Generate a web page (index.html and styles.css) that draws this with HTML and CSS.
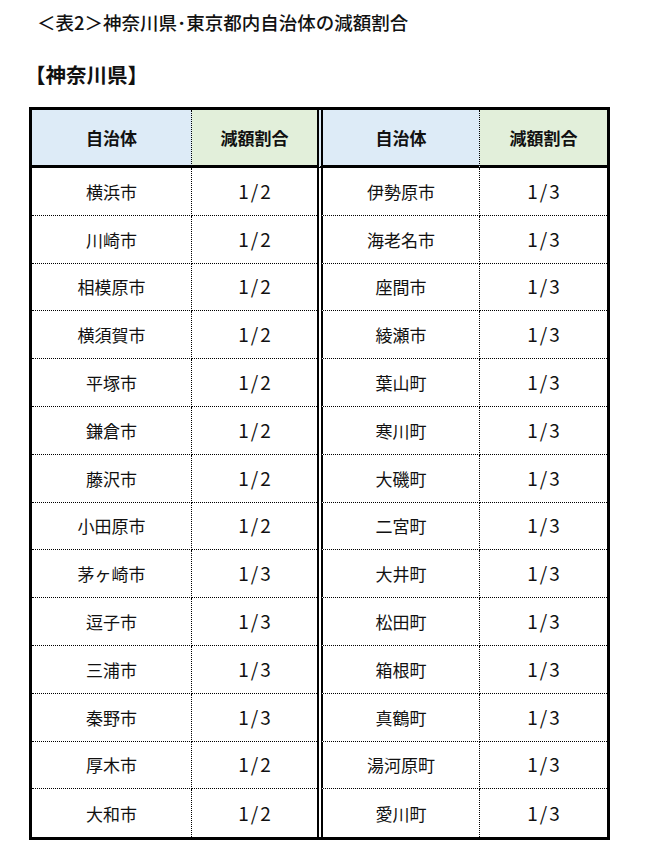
FILE: index.html
```html
<!DOCTYPE html>
<html lang="ja">
<head>
<meta charset="utf-8">
<title>表2</title>
<link rel="stylesheet" href="styles.css">
</head>
<body>
<h1 class="title">＜表2＞神奈川県･東京都内自治体の減額割合</h1>
<h2 class="subtitle">【神奈川県】</h2>
<div class="table">
  <div class="cell head name">自治体</div>
  <div class="cell head rate">減額割合</div>
  <div class="cell head name second">自治体</div>
  <div class="cell head rate">減額割合</div>

  <div class="cell">横浜市</div><div class="cell num">1/2</div><div class="cell second">伊勢原市</div><div class="cell num">1/3</div>
  <div class="cell">川崎市</div><div class="cell num">1/2</div><div class="cell second">海老名市</div><div class="cell num">1/3</div>
  <div class="cell">相模原市</div><div class="cell num">1/2</div><div class="cell second">座間市</div><div class="cell num">1/3</div>
  <div class="cell">横須賀市</div><div class="cell num">1/2</div><div class="cell second">綾瀬市</div><div class="cell num">1/3</div>
  <div class="cell">平塚市</div><div class="cell num">1/2</div><div class="cell second">葉山町</div><div class="cell num">1/3</div>
  <div class="cell">鎌倉市</div><div class="cell num">1/2</div><div class="cell second">寒川町</div><div class="cell num">1/3</div>
  <div class="cell">藤沢市</div><div class="cell num">1/2</div><div class="cell second">大磯町</div><div class="cell num">1/3</div>
  <div class="cell">小田原市</div><div class="cell num">1/2</div><div class="cell second">二宮町</div><div class="cell num">1/3</div>
  <div class="cell">茅ヶ崎市</div><div class="cell num">1/3</div><div class="cell second">大井町</div><div class="cell num">1/3</div>
  <div class="cell">逗子市</div><div class="cell num">1/3</div><div class="cell second">松田町</div><div class="cell num">1/3</div>
  <div class="cell">三浦市</div><div class="cell num">1/3</div><div class="cell second">箱根町</div><div class="cell num">1/3</div>
  <div class="cell">秦野市</div><div class="cell num">1/3</div><div class="cell second">真鶴町</div><div class="cell num">1/3</div>
  <div class="cell">厚木市</div><div class="cell num">1/2</div><div class="cell second">湯河原町</div><div class="cell num">1/3</div>
  <div class="cell last">大和市</div><div class="cell num last">1/2</div><div class="cell second last">愛川町</div><div class="cell num last">1/3</div>
</div>
</body>
</html>
```
FILE: styles.css
```css
html, body {
  margin: 0;
  padding: 0;
  background: #fff;
}
body {
  font-family: "Noto Sans CJK JP", "Noto Sans", sans-serif;
  color: #111;
}
.title {
  margin: 10px 0 0 0;
  padding-left: 37px;
  font-size: 18.5px;
  line-height: 24px;
  font-weight: 500;
}
.subtitle {
  margin: 27px 0 0 0;
  padding-left: 25px;
  font-size: 20.5px;
  line-height: 26px;
  font-weight: 700;
}
.table {
  box-sizing: border-box;
  margin: 20px 0 0 29px;
  width: 581px;
  border: 3px solid #000;
  display: grid;
  grid-template-columns: 160px 125px 163px 127px;
  grid-template-rows: 58px repeat(14, 47.8px);
}
.cell {
  box-sizing: border-box;
  display: flex;
  align-items: center;
  justify-content: center;
  font-size: 17px;
  border-bottom: 1px dotted #000;
}
.cell:nth-child(4n+1), .cell:nth-child(4n+3) {
  border-right: 1px dotted #000;
}
.cell.second {
  border-left: 6px double #000;
}
.cell.last {
  border-bottom: none;
}
.head {
  font-weight: 700;
  border-bottom: 3px solid #000;
}
.head.name {
  background: #ddebf7;
}
.head.rate {
  background: #e2efda;
}
.num {
  font-size: 19px;
  letter-spacing: 2px;
  padding-left: 2px;
  padding-bottom: 2px;
}
```
